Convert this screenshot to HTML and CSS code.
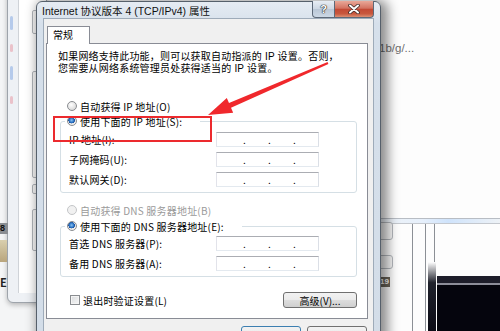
FILE: index.html
```html
<html lang="zh-CN">
<head>
    <meta charset="UTF-8">
    <title>Internet 协议版本 4 (TCP/IPv4) 属性</title>
    <link rel="stylesheet" href="styles.css">
</head>
<body>
<div class="desk">

    <!-- windows behind the dialog -->
    <div class="back-left">
        <div class="bl-win">
            <div class="bl-inner">
                <div class="bl-box b1"></div>
                <div class="bl-box b2"></div>
                <div class="bl-box b3"></div>
                <div class="bl-box b4"></div>
            </div>
            <i class="dot-c blue d1"></i>
            <i class="dot-c red d2"></i>
            <i class="dot-c blue d3"></i>
            <i class="dot-c red d4"></i>
        </div>
        <span class="bl-num">8</span>
        <span class="bl-pic"></span>
        <span class="bl-chr">E</span>
    </div>

    <div class="back-right">
        <span class="url-tail">1b/g/...</span>
        <div class="strip"></div>
        <div class="br-box k1"></div>
        <div class="br-box k2"></div>
        <span class="badge">19</span>
        <div class="vline v1"></div>
        <div class="vline v2"></div>
        <div class="vline v3"></div>
        <div class="dark-col"></div>
        <div class="screen"></div>
    </div>

    <!-- the dialog -->
    <div class="dialog">
        <div class="titlebar">
            <span class="title">Internet 协议版本 4 (TCP/IPv4) 属性</span>
            <div class="caption-btns">
                <span class="cap help">?</span>
                <span class="cap close">
                    <svg width="14" height="10" viewBox="0 0 14 10">
                        <path d="M3 1.5 L11 8.5 M11 1.5 L3 8.5" stroke="#3b2a28" stroke-width="3.6" stroke-linecap="round"/>
                        <path d="M3 1.5 L11 8.5 M11 1.5 L3 8.5" stroke="#fff" stroke-width="2" stroke-linecap="round"/>
                    </svg>
                </span>
            </div>
        </div>

        <div class="client">
            <div class="tabs"><span class="tab">常规</span></div>
            <div class="panel">
                <p class="intro">如果网络支持此功能，则可以获取自动指派的 IP 设置。否则，<br>您需要从网络系统管理员处获得适当的 IP 设置。</p>

                <label class="opt first"><span class="radio"></span>自动获得 IP 地址(O)</label>
                <fieldset class="group ip">
                    <legend><label class="opt"><span class="radio on"></span>使用下面的 IP 地址(S):</label></legend>
                    <div class="field"><span class="lbl">IP 地址(I):</span><span class="ipbox"><i>.</i><i>.</i><i>.</i></span></div>
                    <div class="field"><span class="lbl">子网掩码(U):</span><span class="ipbox"><i>.</i><i>.</i><i>.</i></span></div>
                    <div class="field"><span class="lbl">默认网关(D):</span><span class="ipbox"><i>.</i><i>.</i><i>.</i></span></div>
                </fieldset>

                <label class="opt off"><span class="radio"></span>自动获得 DNS 服务器地址(B)</label>
                <fieldset class="group dns">
                    <legend><label class="opt"><span class="radio on"></span>使用下面的 DNS 服务器地址(E):</label></legend>
                    <div class="field"><span class="lbl">首选 DNS 服务器(P):</span><span class="ipbox"><i>.</i><i>.</i><i>.</i></span></div>
                    <div class="field"><span class="lbl">备用 DNS 服务器(A):</span><span class="ipbox"><i>.</i><i>.</i><i>.</i></span></div>
                </fieldset>

                <div class="foot">
                    <label class="opt"><span class="check"></span>退出时验证设置(L)</label>
                    <span class="btn adv">高级(V)...</span>
                </div>
            </div>
            <!-- OK / Cancel: only their top edges are in view -->
            <div class="dlg-btns">
                <span class="btn ok"></span>
                <span class="btn"></span>
            </div>
        </div>
    </div>

    <!-- annotation drawn over the screenshot -->
    <div class="mark"></div>
    <svg class="arrow" width="500" height="331" viewBox="0 0 500 331">
        <polygon points="327.6,62.1 328.4,63.9 231,107.7 233.2,112.7 208,115 226.8,98.1 229,103.1" fill="#f0282c"/>
    </svg>

</div>
</body>
</html>
```

FILE: styles.css
```css
* {
    box-sizing: border-box;
}
body {
    margin: 0;
    width: 500px;
    height: 331px;
    overflow: hidden;
    background: #fff;
    font-family: "Noto Sans CJK SC", sans-serif;
}
.desk {
    position: relative;
    width: 500px;
    height: 331px;
    overflow: hidden;
}

/* left window behind */
.back-left {
    position: absolute;
    left: 0;
    top: 0;
    width: 44px;
    height: 331px;
    background: #f4f5f6;
}
.bl-win {
    position: absolute;
    left: 7px;
    top: -10px;
    width: 40px;
    height: 313px;
    border: 1px solid #9ea4ab;
    border-radius: 0 0 6px 6px;
    background: #eef1f5;
    box-shadow: 0 2px 5px rgba(0,0,0,.25);
}
.bl-inner {
    position: absolute;
    left: 10px;
    top: 0;
    right: 0;
    bottom: 9px;
    border-left: 1px solid #cfd3d8;
    background: #fff;
}
.bl-box {
    position: absolute;
    left: 13px;
    width: 20px;
    border: 1px solid #b3b7bc;
    border-radius: 2px;
    background: #fafafa;
}
.b1 { top: 19px; height: 24px; }
.b2 { top: 80px; height: 107px; }
.b3 { top: 193px; height: 10px; }
.b4 { top: 218px; height: 42px; }
.dot-c {
    position: absolute;
    left: 2px;
    width: 3px;
    border-radius: 2px;
    opacity: .6;
}
.dot-c.blue { background: #8fb0e4; }
.dot-c.red { background: #e7a3ad; }
.d1 { top: 25px; height: 14px; }
.d2 { top: 53px; height: 8px; }
.d3 { top: 75px; height: 14px; }
.d4 { top: 105px; height: 8px; }
.bl-num {
    position: absolute;
    left: 0;
    top: 223px;
    width: 8px;
    height: 11px;
    background: #8a8d92;
    color: #111;
    font: bold 9px/11px "Liberation Sans", sans-serif;
}
.bl-pic {
    position: absolute;
    left: 0;
    top: 240px;
    width: 7px;
    height: 22px;
    background: linear-gradient(#d9cfae, #b9a57c);
}
.bl-chr {
    position: absolute;
    left: 0;
    top: 276px;
    color: #222;
    font: bold 11px/12px "Noto Sans CJK SC", sans-serif;
}

/* right page behind */
.back-right {
    position: absolute;
    left: 370px;
    top: 0;
    width: 130px;
    height: 331px;
    background: #fdfdfd;
}
.url-tail {
    position: absolute;
    left: 9px;
    top: 41px;
    color: #6e6e6e;
    font: 11.5px/14px "Liberation Sans", sans-serif;
}
.strip {
    position: absolute;
    left: 0;
    right: 0;
    top: 218px;
    height: 6px;
    border-top: 1px solid #b8bdc4;
    border-bottom: 1px solid #c4c8ce;
    background: linear-gradient(90deg, #eef2f6, #e7f0fb 40%, #cfe3fb 60%, #eef2f6);
}
.br-box {
    position: absolute;
    left: 4px;
    width: 19px;
    border: 1px solid #b5b9be;
    border-radius: 3px;
    background: #f6f6f6;
}
.k1 { top: 222px; height: 18px; }
.k2 { top: 255px; height: 14px; }
.badge {
    position: absolute;
    left: 9px;
    top: 277px;
    padding: 0 1px;
    background: #6b655a;
    color: #fff;
    font: bold 8px/10px "Liberation Sans", sans-serif;
}
.vline {
    position: absolute;
    top: 224px;
    bottom: 0;
    width: 1px;
    background: #8c9096;
}
.v1 { left: 42px; }
.v2 { left: 55px; }
.v3 { left: 64px; }
.dark-col {
    position: absolute;
    left: 58px;
    top: 262px;
    width: 8px;
    bottom: 0;
    background: linear-gradient(#fff, #20222c 30%, #0c0c16);
}
.screen {
    position: absolute;
    left: 67px;
    top: 276px;
    right: 0;
    bottom: 0;
    background: #05050d;
    border-top: 7px solid #1e1e2a;
    box-shadow: inset 0 2px 0 #8d8e99;
}

/* dialog */
.dialog {
    position: absolute;
    left: 36px;
    top: 1px;
    width: 345px;
    height: 345px;
    border: 1px solid #56606b;
    border-radius: 6px 6px 0 0;
    background: linear-gradient(#e6ecf3, #d6e0eb 22px, #d3dde8);
    padding: 0 6px;
    box-shadow: 4px 2px 12px 3px rgba(0,0,0,.45);
    display: flex;
    flex-direction: column;
}
.titlebar {
    height: 20px;
    display: flex;
    align-items: center;
}
.title {
    flex: 1;
    margin-left: -1px;
    font-family: "Liberation Sans", "Noto Sans CJK SC", sans-serif;
    font-size: 10.5px;
    color: #111;
    white-space: nowrap;
}
.caption-btns {
    align-self: flex-start;
    margin-top: -1px;
    display: flex;
}
.cap {
    height: 17px;
    display: flex;
    align-items: center;
    justify-content: center;
    border: 1px solid #5d6978;
    border-top: none;
}
.help {
    width: 23px;
    border-radius: 0 0 0 4px;
    background: linear-gradient(#e7edf4, #cdd7e3 50%, #bac7d6 52%, #ccd8e5);
    color: #fff;
    font: bold 11px/1 "Liberation Sans", sans-serif;
    text-shadow: 0 0 1px #222, 0 0 1px #222, 0 0 1px #222;
}
.close {
    width: 39px;
    border-left: none;
    border-radius: 0 0 4px 0;
    background: linear-gradient(#e9a898, #d37361 45%, #c34a35 52%, #c8583e 80%, #dc9075);
}

.client {
    flex: 1;
    background: #f0f0f0;
    border: 1px solid #9eabb9;
    padding: 7px 5px 0 2px;
}
.tabs {
    display: flex;
    position: relative;
    z-index: 1;
    margin-bottom: -1px;
}
.tab {
    margin-left: 1px;
    width: 43px;
    height: 18px;
    border: 1px solid #898c95;
    border-bottom: none;
    background: #fff;
    font-size: 10px;
    line-height: 16px;
    padding-left: 5px;
    color: #000;
}
.panel {
    height: 276px;
    border: 1px solid #898c95;
    background: #fff;
    display: flex;
    flex-direction: column;
    align-items: flex-start;
}
.intro {
    margin: 7px 0 0 11px;
    font-family: "Liberation Sans", "Noto Sans CJK SC", sans-serif;
    font-size: 10px;
    line-height: 11.5px;
    letter-spacing: .2px;
    white-space: nowrap;
    color: #000;
}
.opt {
    display: flex;
    align-items: center;
    gap: 3px;
    height: 14px;
    font-size: 10px;
    letter-spacing: .2px;
    white-space: nowrap;
    color: #000;
}
.opt.first {
    margin: 25px 0 0 20px;
}
.opt.off {
    margin: 10px 0 0 20px;
    color: #9a9a9a;
}
.radio {
    width: 10px;
    height: 10px;
    border-radius: 50%;
    border: 1px solid #8a8d91;
    background: radial-gradient(circle at 40% 35%, #fff, #dcdcdc 70%, #cfd0d2);
}
.radio.on {
    background: radial-gradient(circle at 45% 40%, #8cc2ef 0, #2a73c5 35%, #1c4f9a 48%, #e9e9e9 52%, #f6f6f6);
}
.opt.off .radio {
    border-color: #c4c6c8;
    background: #f1f1f1;
}
.check {
    width: 10px;
    height: 10px;
    border: 1px solid #8a8d91;
    background: linear-gradient(135deg, #d9dbdd, #f7f7f7);
    box-shadow: inset 0 0 0 1px #f4f4f4;
}

.group {
    align-self: stretch;
    margin: 1px 10px 0 13px;
    border: 1px solid #d5dfe5;
    border-radius: 3px;
    padding: 4px 8px 5px 8px;
    min-width: 0;
}
.group.dns {
    margin-top: 2px;
    padding-top: 3px;
}
.group legend {
    padding: 0 18px 0 2px;
    margin-left: -4px;
}
.field {
    display: flex;
    align-items: center;
    height: 15px;
    font-size: 10px;
    letter-spacing: .2px;
    color: #000;
}
.field + .field {
    margin-top: 5px;
}
.lbl {
    width: 147px;
    white-space: nowrap;
}
.ipbox {
    width: 103px;
    height: 15px;
    display: flex;
    padding-left: 26px;
    border: 1px solid;
    border-color: #abadb3 #dbdfe6 #e3e9ef #e2e3ea;
    background: #fff;
    line-height: 13px;
    font-size: 10px;
}
.ipbox i {
    font-style: normal;
    width: 26px;
}

.foot {
    align-self: stretch;
    margin: 15px 10px 0 23px;
    display: flex;
    justify-content: space-between;
    align-items: center;
    height: 16px;
}
.btn {
    display: flex;
    align-items: center;
    justify-content: center;
    height: 16px;
    border: 1px solid #707070;
    border-radius: 3px;
    background: linear-gradient(#f2f2f2, #ebebeb 48%, #dddddd 52%, #cfcfcf);
    font-size: 10px;
    color: #000;
    white-space: nowrap;
}
.adv {
    width: 74px;
}
.dlg-btns {
    display: flex;
    gap: 6px;
    margin: 7px 0 0 195px;
}
.dlg-btns .btn {
    width: 60px;
    height: 18px;
}
.dlg-btns .ok {
    border-color: #3c7fb1;
}

/* annotation */
.mark {
    position: absolute;
    left: 53px;
    top: 116px;
    width: 159px;
    height: 26px;
    border: 2px solid #ec2a2e;
}
.arrow {
    position: absolute;
    left: 0;
    top: 0;
}
```
